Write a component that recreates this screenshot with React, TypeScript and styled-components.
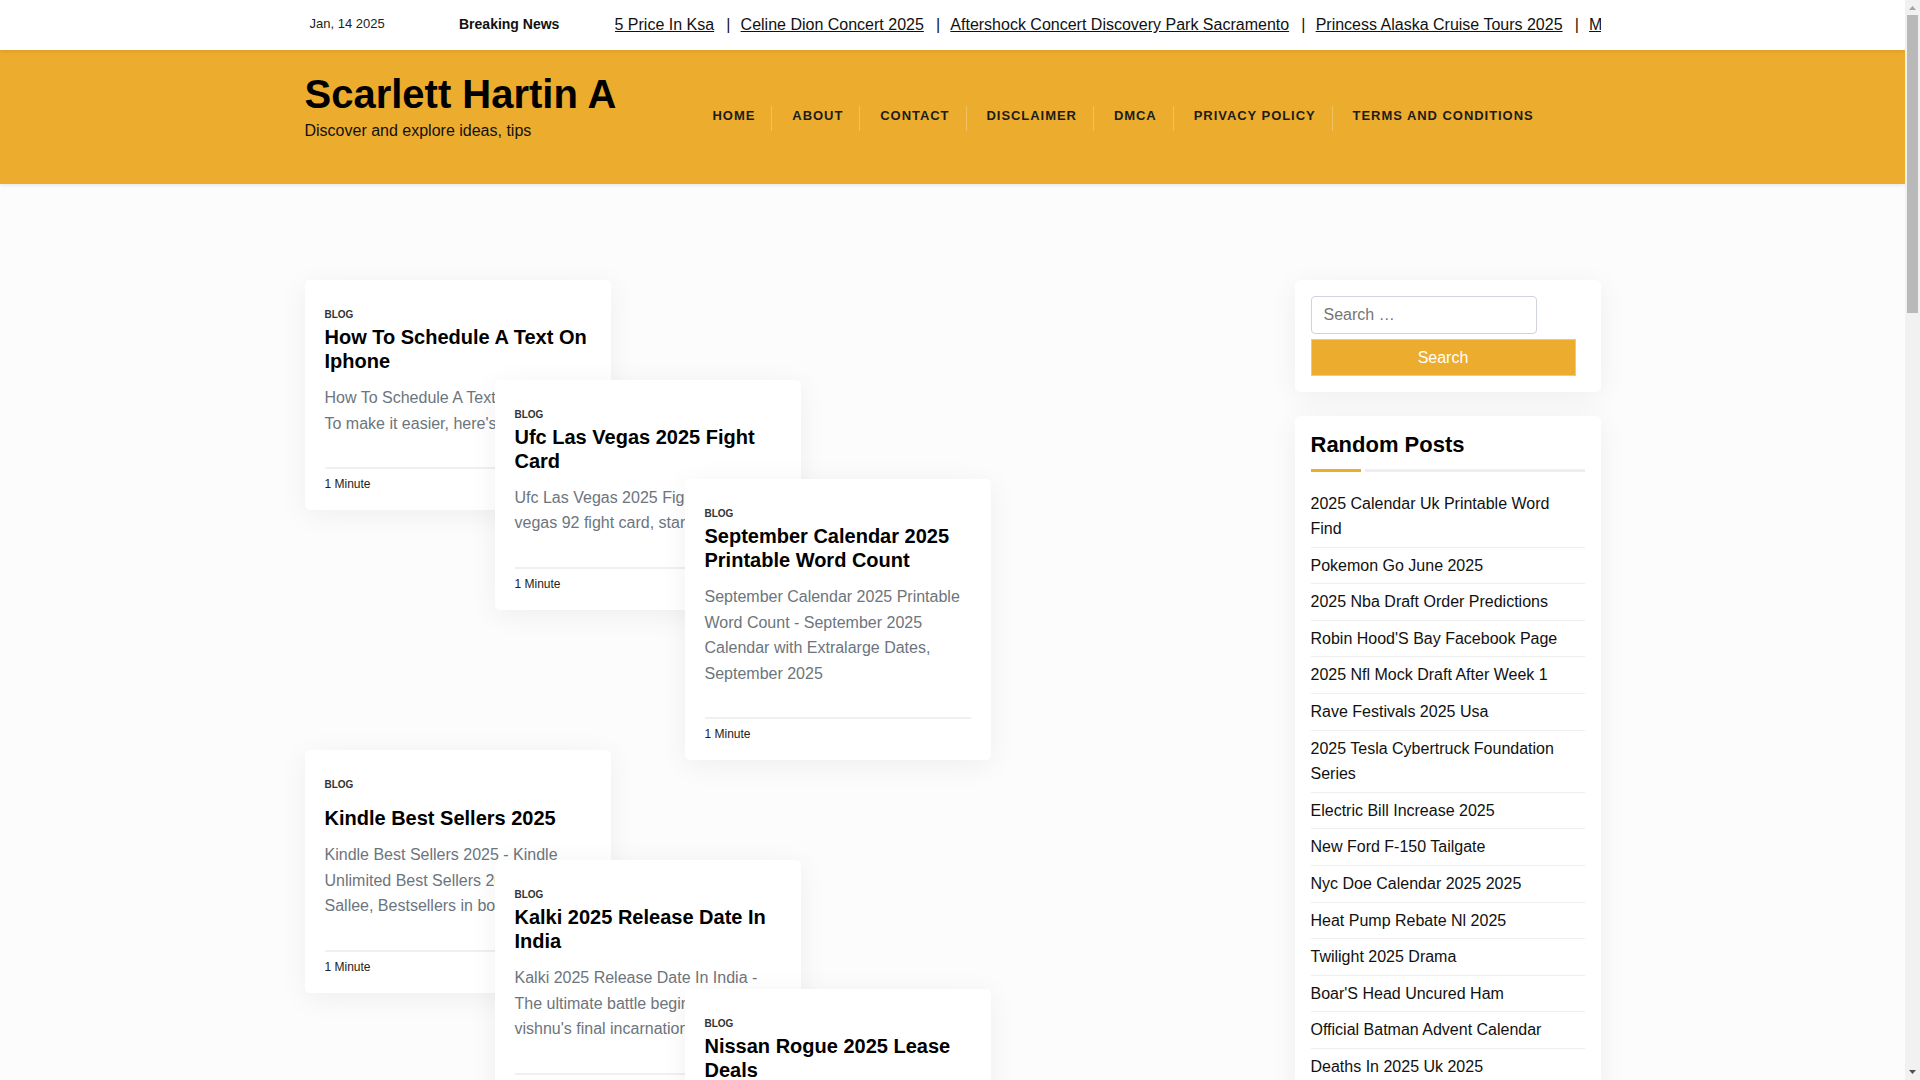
import React from 'react';
import styled, { createGlobalStyle } from 'styled-components';

const GlobalStyle = createGlobalStyle`
  * {
    box-sizing: border-box;
  }

  html,
  body {
    margin: 0;
    padding: 0;
  }

  body {
    background: #fcfcfc;
    color: #111;
    font-family: 'Liberation Sans', Arial, sans-serif;
    font-size: 16px;
    line-height: 25.6px;
  }

  a {
    color: inherit;
  }
`;

const Page = styled.div`
  padding-right: 15px;
`;

const ScrollTrack = styled.div`
  position: fixed;
  top: 0;
  right: 0;
  bottom: 0;
  width: 15px;
  background: #f1f1f1;
`;

const ScrollThumb = styled.div`
  position: absolute;
  top: 15px;
  left: 2px;
  width: 11px;
  height: 298px;
  background: #b9b9b9;
`;

const ScrollArrow = styled.svg<{ $down?: boolean }>`
  position: absolute;
  left: 4px;
  width: 7px;
  height: 4px;
  ${p => (p.$down ? 'bottom: 6px;' : 'top: 6px;')}
`;

const Container = styled.div`
  width: 1320px;
  margin: 0 auto;
  padding: 0 12px;
`;

const TopBar = styled.div`
  height: 50px;
  background: #fff;
  box-shadow: 0 1px 4px rgba(0, 0, 0, 0.1);
  position: relative;
`;

const TopRow = styled.div`
  display: flex;
  align-items: center;
  height: 50px;
`;

const DateText = styled.span`
  width: 154.5px;
  padding: 0 0 2px 5px;
  font-size: 13px;
  color: #222;
`;

const BreakingLabel = styled.span`
  width: 155.5px;
  font-size: 14px;
  font-weight: 700;
  color: #111;
`;

const Ticker = styled.div`
  flex: 1;
  display: flex;
  white-space: nowrap;
  overflow: hidden;
`;

const TickerLink = styled.a`
  flex: none;
  color: #111;
  text-decoration: underline;
`;

const TickerSep = styled.span`
  flex: none;
  width: 26.5px;
  padding-left: 2px;
  text-align: center;
  color: #111;
`;

const HeaderBar = styled.header`
  height: 134px;
  background: #ecac2d;
  box-shadow: 0 1px 4px rgba(0, 0, 0, 0.1);
`;

const HeaderRow = styled.div`
  display: flex;
  align-items: flex-start;
`;

const Brand = styled.div`
  width: 388px;
  padding-top: 20px;
`;

const SiteTitle = styled.h1`
  margin: 0;
  font-size: 40px;
  line-height: 48px;
  font-weight: 700;
  color: #000;
`;

const Tagline = styled.p`
  margin: 0;
  color: #111;
`;

const Nav = styled.nav`
  display: flex;
  margin-top: 56px;
`;

const NavItem = styled.a`
  height: 25px;
  padding: 0 16px 0 20px;
  border-right: 1px solid rgba(255, 255, 255, 0.25);
  font-size: 13px;
  line-height: 19px;
  font-weight: 700;
  letter-spacing: 0.95px;
  text-transform: uppercase;
  text-decoration: none;
  color: #1c1c1c;

  &:last-child {
    border-right: none;
  }
`;

const ContentRow = styled.div`
  display: flex;
  padding-top: 96px;
`;

const Masonry = styled.main`
  position: relative;
  flex: 1;
`;

const shadow = '0 5px 30px rgba(0, 0, 0, 0.06)';

// cards overlap each other, so the masonry keeps them at set offsets
const PostCard = styled.article<{ $x: number; $y: number }>`
  position: absolute;
  left: ${p => p.$x}px;
  top: ${p => p.$y}px;
  width: 306px;
  padding: 27px 20px 18px;
  background: #fff;
  border-radius: 5px;
  box-shadow: ${shadow};
`;

const Category = styled.div`
  font-size: 10px;
  line-height: 16px;
  font-weight: 700;
  color: #333;
`;

const PostTitle = styled.h2<{ $single?: boolean }>`
  margin: ${p => (p.$single ? '13px' : '2px')} 0 12px;
  font-size: 20px;
  line-height: 24px;
  font-weight: 700;
  color: #000;
`;

const Excerpt = styled.p`
  margin: 0 0 31px;
  color: #6c757d;
`;

const PostMeta = styled.div`
  padding-top: 7px;
  border-top: 2px solid #f0f0f0;
  font-size: 12px;
  line-height: 16px;
  color: #222;
`;

const Sidebar = styled.aside`
  width: 306px;
  flex: none;
`;

const Widget = styled.section`
  margin-bottom: 24px;
  padding: 16px;
  background: #fff;
  border-radius: 5px;
  box-shadow: ${shadow};
`;

const SearchInput = styled.input`
  display: block;
  width: 226px;
  height: 38px;
  padding: 0 12px;
  border: 1px solid #d0d4dc;
  border-radius: 4px;
  background: #fff;
  font-family: 'Liberation Sans', Arial, sans-serif;
  font-size: 16px;

  &::placeholder {
    color: #757575;
    opacity: 1;
  }
`;

const SearchButton = styled.button`
  display: block;
  width: 265px;
  height: 37px;
  margin-top: 5px;
  border: 1px solid #c8ccd4;
  background: #ecac2d;
  color: #fff;
  font-family: 'Liberation Sans', Arial, sans-serif;
  font-size: 16px;
`;

const WidgetTitle = styled.h3`
  margin: 0;
  font-size: 22px;
  line-height: 26px;
  font-weight: 700;
  color: #000;
`;

const TitleRule = styled.div`
  display: flex;
  gap: 4px;
  height: 3px;
  margin: 11px 0 13.5px;

  &::before {
    content: '';
    width: 50px;
    background: #ecac2d;
  }

  &::after {
    content: '';
    flex: 1;
    background: #eee;
  }
`;

const PostList = styled.ul`
  margin: 0;
  padding: 0;
  list-style: none;
`;

const PostItem = styled.li`
  padding: 5px 0;
  border-bottom: 1px solid #eee;
  color: #111;

  a {
    text-decoration: none;
  }

  &:last-child {
    border-bottom: none;
  }
`;

const tickerLinks = [
  '5 Price In Ksa',
  'Celine Dion Concert 2025',
  'Aftershock Concert Discovery Park Sacramento',
  'Princess Alaska Cruise Tours 2025',
  'Mlb Opening Day 2025',
];

const navLinks = ['Home', 'About', 'Contact', 'Disclaimer', 'DMCA', 'Privacy Policy', 'Terms and Conditions'];

const posts = [
  {
    x: 0,
    y: 0,
    title: 'How To Schedule A Text On Iphone',
    lines: ['How To Schedule A Text On Iphone', "To make it easier, here's how"],
  },
  {
    x: 190,
    y: 99.6,
    title: 'Ufc Las Vegas 2025 Fight Card',
    lines: ['Ufc Las Vegas 2025 Fight Card', 'vegas 92 fight card, start time'],
  },
  {
    x: 380,
    y: 199,
    title: 'September Calendar 2025 Printable Word Count',
    lines: [
      'September Calendar 2025 Printable',
      'Word Count - September 2025',
      'Calendar with Extralarge Dates,',
      'September 2025',
    ],
  },
  {
    x: 0,
    y: 470,
    single: true,
    title: 'Kindle Best Sellers 2025',
    lines: ['Kindle Best Sellers 2025 - Kindle', 'Unlimited Best Sellers 2025', 'Sallee, Bestsellers in books'],
  },
  {
    x: 190,
    y: 580,
    title: 'Kalki 2025 Release Date In India',
    lines: ['Kalki 2025 Release Date In India -', 'The ultimate battle begins', "vishnu's final incarnation"],
  },
  {
    x: 380,
    y: 709,
    title: 'Nissan Rogue 2025 Lease Deals',
    lines: ['Nissan Rogue 2025 Lease Deals', 'Lease offers and monthly prices', 'for the new model year'],
  },
];

const randomPosts = [
  '2025 Calendar Uk Printable Word Find',
  'Pokemon Go June 2025',
  '2025 Nba Draft Order Predictions',
  "Robin Hood'S Bay Facebook Page",
  '2025 Nfl Mock Draft After Week 1',
  'Rave Festivals 2025 Usa',
  '2025 Tesla Cybertruck Foundation Series',
  'Electric Bill Increase 2025',
  'New Ford F-150 Tailgate',
  'Nyc Doe Calendar 2025 2025',
  'Heat Pump Rebate Nl 2025',
  'Twilight 2025 Drama',
  "Boar'S Head Uncured Ham",
  'Official Batman Advent Calendar',
  'Deaths In 2025 Uk 2025',
];

export default function App() {
  return (
    <Page>
      <GlobalStyle />
      <TopBar>
        <Container>
          <TopRow>
            <DateText>Jan, 14 2025</DateText>
            <BreakingLabel>Breaking News</BreakingLabel>
            <Ticker>
              {tickerLinks.map((link, i) => (
                <React.Fragment key={link}>
                  {i > 0 && <TickerSep>|</TickerSep>}
                  <TickerLink href="#">{link}</TickerLink>
                </React.Fragment>
              ))}
            </Ticker>
          </TopRow>
        </Container>
      </TopBar>
      <HeaderBar>
        <Container>
          <HeaderRow>
            <Brand>
              <SiteTitle>Scarlett Hartin A</SiteTitle>
              <Tagline>Discover and explore ideas, tips</Tagline>
            </Brand>
            <Nav>
              {navLinks.map(link => (
                <NavItem href="#" key={link}>
                  {link}
                </NavItem>
              ))}
            </Nav>
          </HeaderRow>
        </Container>
      </HeaderBar>
      <Container>
        <ContentRow>
          <Masonry>
            {posts.map(post => (
              <PostCard $x={post.x} $y={post.y} key={post.title}>
                <Category>BLOG</Category>
                <PostTitle $single={post.single}>{post.title}</PostTitle>
                <Excerpt>
                  {post.lines.map((line, i) => (
                    <React.Fragment key={line}>
                      {i > 0 && <br />}
                      {line}
                    </React.Fragment>
                  ))}
                </Excerpt>
                <PostMeta>1 Minute</PostMeta>
              </PostCard>
            ))}
          </Masonry>
          <Sidebar>
            <Widget>
              <SearchInput placeholder="Search …" />
              <SearchButton>Search</SearchButton>
            </Widget>
            <Widget>
              <WidgetTitle>Random Posts</WidgetTitle>
              <TitleRule />
              <PostList>
                {randomPosts.map(title => (
                  <PostItem key={title}>
                    <a href="#">{title}</a>
                  </PostItem>
                ))}
              </PostList>
            </Widget>
          </Sidebar>
        </ContentRow>
      </Container>
      <ScrollTrack>
        <ScrollArrow viewBox="0 0 7 4">
          <path d="M3.5 0L7 4H0z" fill="#a3a3a3" />
        </ScrollArrow>
        <ScrollThumb />
        <ScrollArrow $down viewBox="0 0 7 4">
          <path d="M0 0H7L3.5 4z" fill="#505050" />
        </ScrollArrow>
      </ScrollTrack>
    </Page>
  );
}
